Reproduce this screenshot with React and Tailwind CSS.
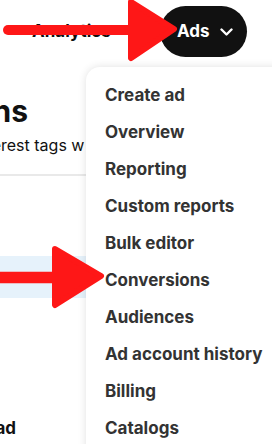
import React from 'react';

const menuItems = [
  'Create ad',
  'Overview',
  'Reporting',
  'Custom reports',
  'Bulk editor',
  'Conversions',
  'Audiences',
  'Ad account history',
  'Billing',
  'Catalogs',
];

function Arrows() {
  return (
    <svg className="absolute inset-0 pointer-events-none" width="272" height="444" viewBox="0 0 272 444">
      <g fill="#fe1717" stroke="#fe1717" strokeLinejoin="round" strokeLinecap="round">
        <line x1="8" y1="30" x2="136" y2="30" strokeWidth="10" />
        <polygon points="131,2 174,29 131,58" strokeWidth="6" />
        <line x1="-6" y1="277.5" x2="60" y2="277.5" strokeWidth="11.5" />
        <polygon points="55,249 101,276 55,305" strokeWidth="6" />
      </g>
    </svg>
  );
}

export default function App() {
  return (
    <div className="relative w-[272px] h-[444px] overflow-hidden bg-white font-['Inter',sans-serif] text-[#111]">
      <header className="flex items-center justify-between pt-[6px] pl-[32px] pr-[25px]">
        <span className="text-[17px] font-bold">Analytics</span>
        <button className="flex items-center gap-[10px] h-[51px] w-[87px] pl-[17px] rounded-full bg-[#111] text-white text-[17px] font-bold">
          Ads
          <svg width="13" height="8" viewBox="0 0 13 8" fill="none">
            <path d="M1.5 1.5l5 5 5-5" stroke="white" strokeWidth="2.4" strokeLinecap="round" strokeLinejoin="round" />
          </svg>
        </button>
      </header>

      <main className="flex flex-col w-[86px] overflow-hidden">
        <div className="mt-[36px] flex justify-end w-[28px] whitespace-nowrap text-[30px] leading-[36px] font-bold">
          Conversions
        </div>
        <div className="mt-[5.6px] flex whitespace-nowrap text-[16px] leading-[20px]">
          <span className="flex justify-end w-[1px] shrink-0">Use Pinte</span>
          <span>rest tags w</span>
        </div>
        <div className="mt-[19.4px] h-[2px] w-full bg-[#e9e9e9]" />
        <div className="mt-[80px] h-[42px] w-full bg-[#e6f2fb]" />
        <div className="mt-[120px] flex justify-end w-[16px] whitespace-nowrap text-[17px] leading-[20px] font-bold">
          Create ad
        </div>
      </main>

      <nav className="absolute left-[86px] top-[67px] w-[230px] h-[420px] rounded-[14px] bg-white pt-[10px] shadow-[0_0_8px_rgba(0,0,0,0.12)]">
        {menuItems.map((item) => (
          <div key={item} className="flex items-center h-[37px] pl-[19px] text-[17px] font-bold text-[#333] whitespace-nowrap">
            {item}
          </div>
        ))}
      </nav>

      <Arrows />
    </div>
  );
}
